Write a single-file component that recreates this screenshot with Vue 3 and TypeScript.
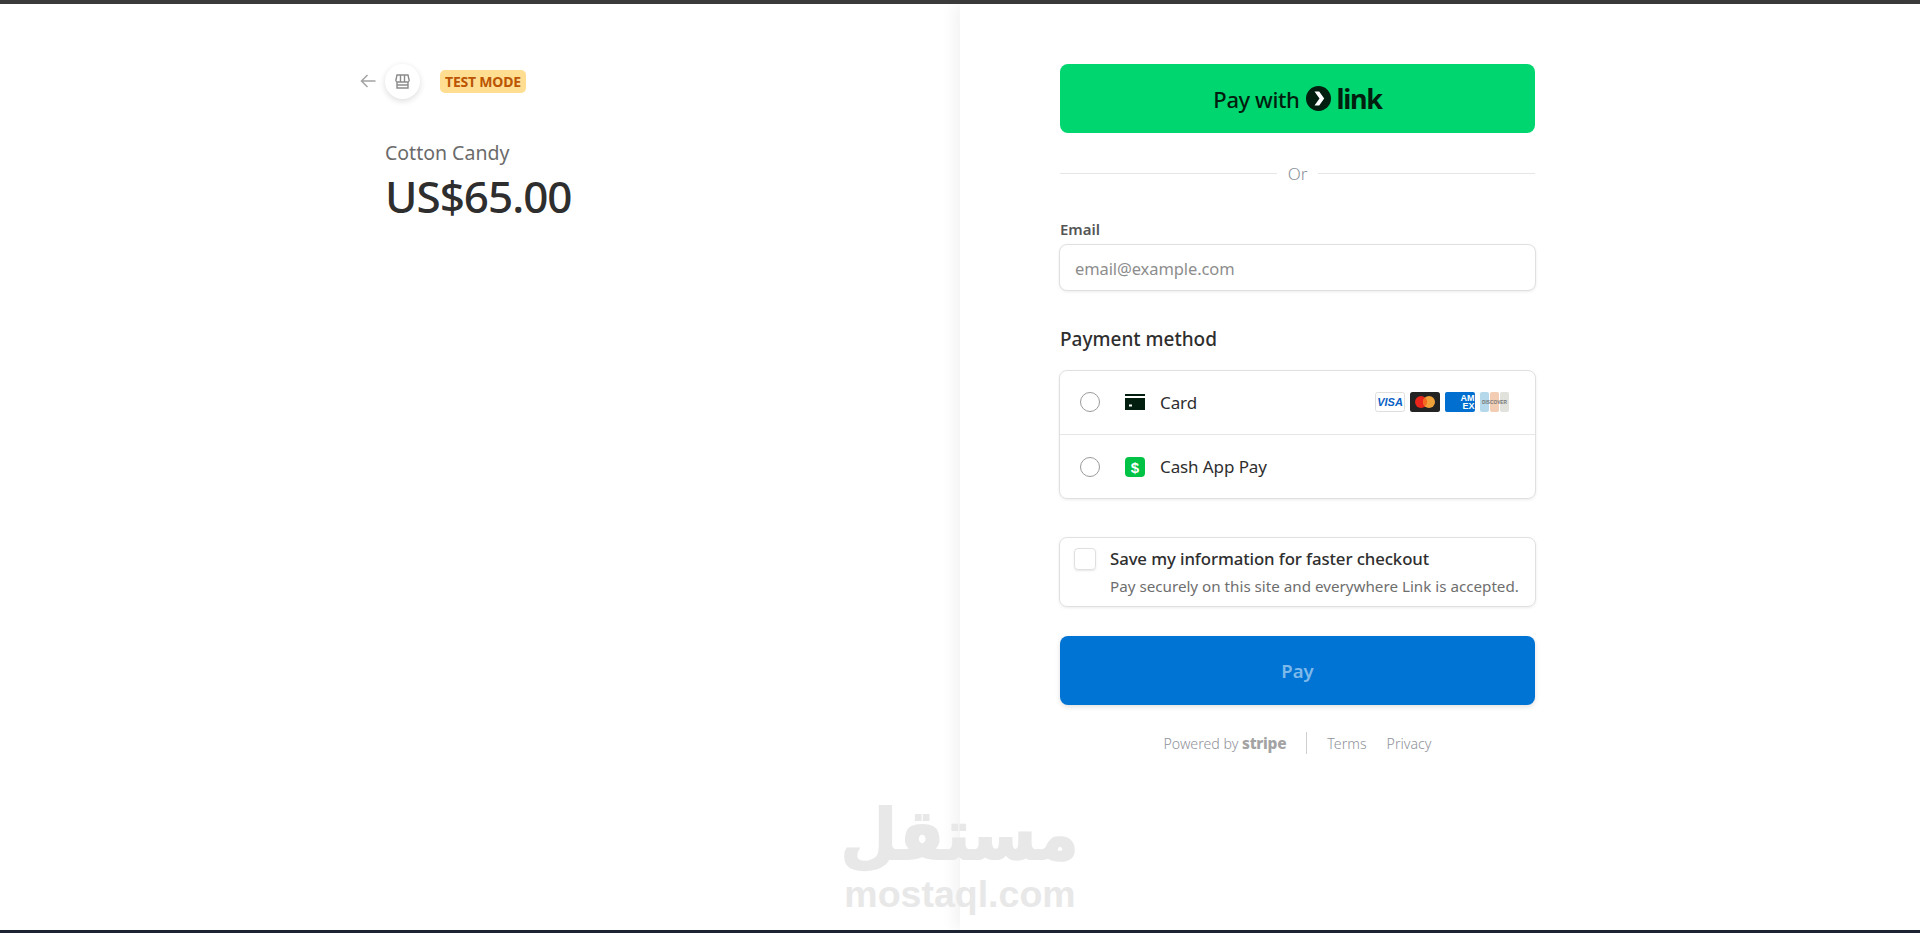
<template>
  <div class="page">
    <div class="top-bar"></div>
    <main class="main">
      <section class="summary">
        <header class="summary-head">
          <svg class="back" width="16" height="14" viewBox="0 0 16 14" fill="none" stroke="#a3a3a3" stroke-width="1.5">
            <path d="M15.5 7H1.5M7.5 1L1.5 7l6 6" />
          </svg>
          <span class="shop-logo">
            <svg width="15" height="15" viewBox="0 0 15 15" fill="none" stroke="#8a8a8a" stroke-width="1.4">
              <path d="M2 1h11l1.2 5.5a1.8 1.8 0 0 1-1.8 1.5H2.600a1.800 1.800 0 0 1-1.800-1.500z" />
              <path d="M5.500 1v7M9.500 1v7M2 8v6h11V8M2 11h11" />
            </svg>
          </span>
          <span class="test-badge">TEST MODE</span>
        </header>
        <div class="product-name">{{ productName }}</div>
        <div class="price">{{ price }}</div>
      </section>

      <section class="checkout">
        <button class="link-btn" type="button">
          <span>Pay with</span>
          <span class="link-mark">
            <svg width="25" height="25" viewBox="0 0 25 25">
              <circle cx="12.500" cy="12.500" r="12.500" fill="#011e0f" />
              <path d="M8.500 5.500h4.700l5 7-5 7H8.500l5-7z" fill="#fff" />
            </svg>
            <span class="link-word">link</span>
          </span>
        </button>

        <div class="or-row"><span>Or</span></div>

        <label class="field-label">Email</label>
        <input class="email" type="text" placeholder="email@example.com" />

        <h2 class="section-title">Payment method</h2>
        <div class="methods">
          <div class="method">
            <span class="radio"></span>
            <svg class="method-icon" width="20" height="16" viewBox="0 0 20 16">
              <path d="M0 0h20v2H0zM0 4h20v12H0z" fill="#011e0f" />
              <rect x="4" y="10.500" width="3" height="2" fill="#fff" />
            </svg>
            <span class="method-name">Card</span>
            <span class="brands">
              <svg width="30" height="20" viewBox="0 0 30 20">
                <rect x=".5" y=".5" width="29" height="19" rx="2" fill="#fff" stroke="#dedede" />
                <text x="15" y="14" text-anchor="middle" class="visa">VISA</text>
              </svg>
              <svg width="30" height="20" viewBox="0 0 30 20">
                <rect width="30" height="20" rx="2.500" fill="#232323" />
                <circle cx="11" cy="10" r="6" fill="#e8261c" />
                <circle cx="19" cy="10" r="6" fill="#f0a23a" />
                <path d="M15 5.500a6 6 0 0 1 0 9 6 6 0 0 1 0-9z" fill="#f26a1f" />
              </svg>
              <svg width="30" height="20" viewBox="0 0 30 20">
                <rect width="30" height="20" rx="2" fill="#016fd0" />
                <text x="29.500" y="9" text-anchor="end" class="amex">AM</text>
                <text x="29.500" y="17" text-anchor="end" class="amex">EX</text>
              </svg>
              <svg width="29" height="20" viewBox="0 0 29 20">
                <rect width="9" height="20" rx="2" fill="#b5d9ea" />
                <rect x="10" width="9" height="20" rx="2" fill="#f2cdb4" />
                <rect x="20" width="9" height="20" rx="2" fill="#e2e2dc" />
                <text x="14.500" y="12" text-anchor="middle" class="discover">DISCOVER</text>
              </svg>
            </span>
          </div>
          <div class="method">
            <span class="radio"></span>
            <svg class="method-icon" width="20" height="20" viewBox="0 0 20 20">
              <rect width="20" height="20" rx="4" fill="#00c244" />
              <text x="10" y="15.500" text-anchor="middle" class="dollar">$</text>
            </svg>
            <span class="method-name">Cash App Pay</span>
          </div>
        </div>

        <div class="save-box">
          <span class="check"></span>
          <div>
            <div class="save-title">Save my information for faster checkout</div>
            <div class="save-note">Pay securely on this site and everywhere Link is accepted.</div>
          </div>
        </div>

        <button class="pay-btn" type="button">Pay</button>

        <footer class="legal">
          <span class="powered">Powered by <b>stripe</b></span>
          <span class="legal-sep"></span>
          <span>Terms</span>
          <span>Privacy</span>
        </footer>
      </section>
    </main>
    <div class="bottom-bar"></div>

    <div class="watermark">
      <div class="wm-ar">مستقل</div>
      <div class="wm-en">mostaql.com</div>
    </div>
  </div>
</template>

<script setup lang="ts">
const productName: string = 'Cotton Candy'
const price: string = 'US$65.00'
</script>

<style>
body {
  margin: 0;
  background: #fff;
}
</style>

<style scoped>
.page {
  position: relative;
  display: flex;
  flex-direction: column;
  height: 933px;
  overflow: hidden;
  font-family: "Noto Sans", "Open Sans", sans-serif;
  color: #1a1a1a;
}
.top-bar {
  height: 4px;
  background: #3b3b3b;
}
.bottom-bar {
  height: 3px;
  background: #1c2433;
}
.main {
  flex: 1;
  display: flex;
}
.summary {
  width: 960px;
  box-sizing: border-box;
  padding: 59px 0 0 360px;
}
.summary-head {
  display: flex;
  align-items: center;
  height: 36px;
}
.back {
  margin-right: 9px;
}
.shop-logo {
  display: flex;
  align-items: center;
  justify-content: center;
  width: 35px;
  height: 35px;
  border-radius: 50%;
  box-shadow: 0 2px 6px rgba(0, 0, 0, 0.14);
}
.test-badge {
  margin-left: 20px;
  padding: 0 5px;
  height: 23px;
  line-height: 23px;
  border-radius: 5px;
  background: #ffde92;
  color: #bb5504;
  font-size: 14px;
  font-weight: 700;
  letter-spacing: -0.2px;
}
.product-name {
  margin: 41px 0 0 25px;
  font-size: 19.500px;
  line-height: 26px;
  color: #6b6b6b;
}
.price {
  margin: 2px 0 0 25px;
  font-size: 44px;
  font-weight: 500;
  line-height: 56px;
  letter-spacing: -1px;
  color: #2e2e2e;
}
.checkout {
  width: 960px;
  box-sizing: border-box;
  padding: 60px 0 0 100px;
  box-shadow: -6px 0 14px rgba(0, 0, 0, 0.05);
  background: #fff;
}
.checkout > * {
  width: 475px;
  box-sizing: border-box;
}
.link-btn {
  display: flex;
  align-items: center;
  justify-content: center;
  gap: 7px;
  height: 69px;
  border: 0;
  border-radius: 8px;
  background: #00d66f;
  color: #011e0f;
  font: 500 22px "Noto Sans", sans-serif;
  letter-spacing: -0.4px;
}
.link-mark {
  display: flex;
  align-items: center;
  gap: 5px;
}
.link-word {
  font-size: 27px;
  font-weight: 700;
  letter-spacing: -1.3px;
  line-height: 25px;
}
.or-row {
  display: flex;
  align-items: center;
  gap: 11px;
  height: 24px;
  margin-top: 28px;
  color: #8a8f98;
  font-size: 17px;
  font-weight: 300;
}
.or-row::before,
.or-row::after {
  content: "";
  flex: 1;
  height: 1px;
  background: #e6e6e6;
}
.field-label {
  display: block;
  margin-top: 34px;
  font-size: 15px;
  font-weight: 600;
  line-height: 20px;
  color: #555;
}
.checkout > .email,
.checkout > .methods,
.checkout > .save-box {
  width: 477px;
  margin-left: -1px;
}
.email {
  display: block;
  height: 47px;
  margin-top: 5px;
  padding: 2px 15px 0;
  border: 1px solid #e0e0e0;
  border-radius: 8px;
  box-shadow: 0 1px 3px rgba(0, 0, 0, 0.08);
  font: 16.500px "Noto Sans", sans-serif;
  letter-spacing: -0.1px;
  outline: none;
  color: #1a1a1a;
}
.email::placeholder {
  color: #8d8d8d;
  opacity: 1;
}
.section-title {
  margin: 34px 0 0;
  font-size: 19px;
  font-weight: 500;
  line-height: 28px;
  color: #2e2e2e;
}
.methods {
  margin-top: 17px;
  border: 1px solid #e0e0e0;
  border-radius: 8px;
  box-shadow: 0 1px 3px rgba(0, 0, 0, 0.08);
}
.method {
  display: flex;
  align-items: center;
  height: 63px;
  padding: 0 26px 0 20px;
}
.method:first-child {
  height: 62px;
  padding-bottom: 1px;
}
.method + .method {
  border-top: 1px solid #e6e6e6;
}
.radio {
  width: 18px;
  height: 18px;
  border: 1px solid #9a9a9a;
  border-radius: 50%;
}
.method-icon {
  margin-left: 25px;
}
.method-name {
  margin-left: 15px;
  font-size: 17px;
  letter-spacing: -0.1px;
  color: #2e2e2e;
}
.brands {
  display: flex;
  gap: 5px;
  margin-left: auto;
}
.visa {
  font: italic 800 11px "Liberation Sans", sans-serif;
  fill: #0b5fc4;
}
.amex {
  font: 700 9px "Liberation Sans", sans-serif;
  fill: #fff;
}
.discover {
  font: 700 4.800px "Liberation Sans", sans-serif;
  fill: #777;
}
.dollar {
  font: 700 15px "Liberation Sans", sans-serif;
  fill: #fff;
}
.save-box {
  display: flex;
  height: 70px;
  margin-top: 38px;
  padding: 9px 14px;
  border: 1px solid #e0e0e0;
  border-radius: 8px;
  box-shadow: 0 1px 3px rgba(0, 0, 0, 0.08);
}
.check {
  flex: none;
  width: 20px;
  height: 20px;
  margin-top: 1px;
  margin-right: 14px;
  border: 1px solid #e0e0e0;
  border-radius: 4px;
  box-shadow: 0 1px 2px rgba(0, 0, 0, 0.1);
}
.save-title {
  font-size: 16.800px;
  font-weight: 500;
  line-height: 24px;
  letter-spacing: -0.1px;
  color: #2e2e2e;
}
.save-note {
  margin-top: 5px;
  font-size: 15.200px;
  line-height: 20px;
  color: #6e6e6e;
}
.pay-btn {
  display: block;
  height: 69px;
  margin-top: 29px;
  border: 0;
  border-radius: 8px;
  background: #0074d4;
  box-shadow: 0 2px 5px rgba(0, 0, 0, 0.12);
  color: #7fb9ea;
  font: 600 18.500px "Noto Sans", sans-serif;
}
.legal {
  display: flex;
  align-items: center;
  justify-content: center;
  height: 24px;
  margin-top: 26px;
  gap: 20px;
  color: #8f9299;
  font-size: 14.200px;
  font-weight: 300;
}
.powered b {
  font-weight: 800;
  font-size: 15.500px;
  letter-spacing: -0.3px;
  color: #a3a3a3;
}
.legal-sep {
  width: 1px;
  height: 22px;
  background: #cfcfcf;
}
.watermark {
  position: absolute;
  left: 844px;
  top: 800px;
  width: 232px;
  text-align: center;
  color: #e8e8e8;
  pointer-events: none;
}
.wm-ar {
  margin-left: -12px;
  font: 700 70px/70px "DejaVu Sans", sans-serif;
  -webkit-text-stroke: 2px #e8e8e8;
  transform: scaleX(0.93);
}
.wm-en {
  margin-top: 4px;
  font: 700 37.500px/40px "Liberation Sans", sans-serif;
}
</style>
